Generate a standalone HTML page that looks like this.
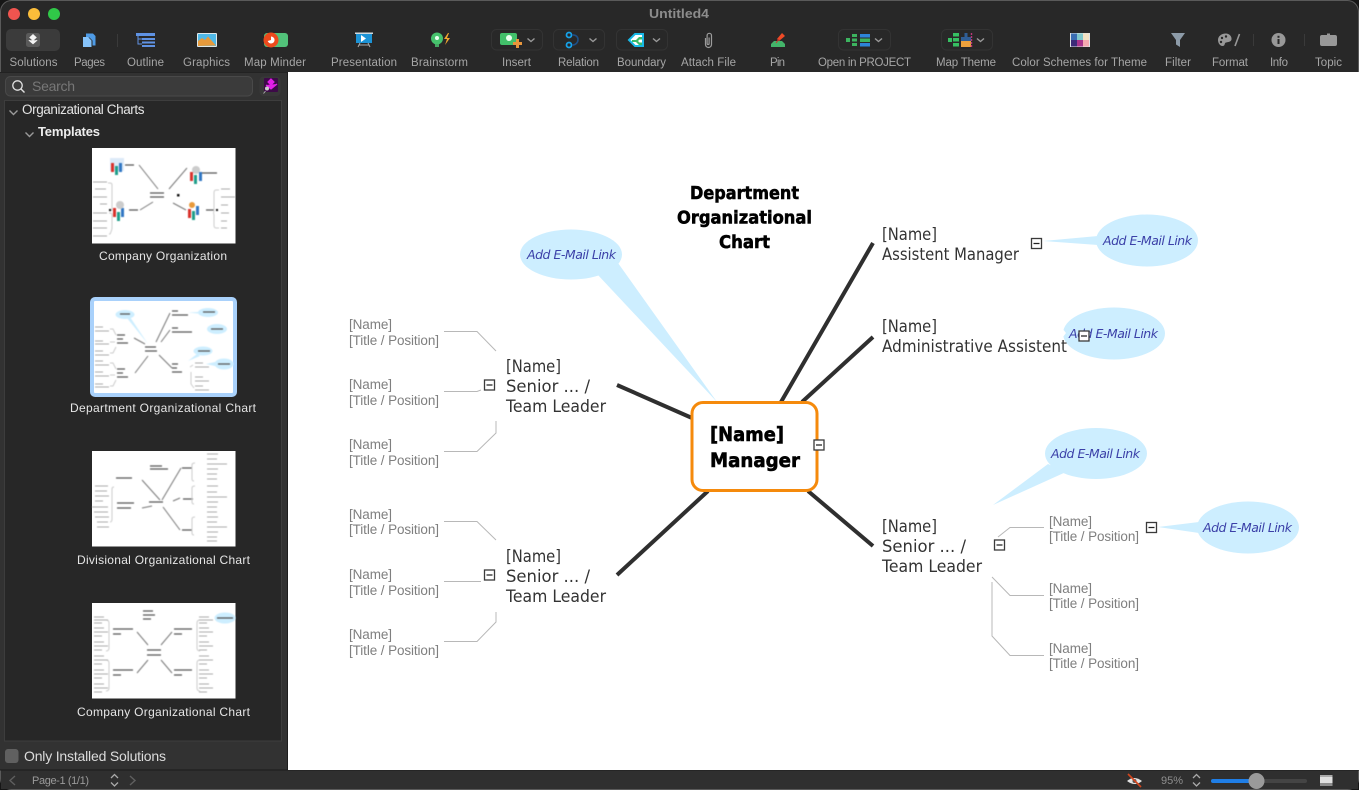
<!DOCTYPE html>
<html><head><meta charset="utf-8"><title>Untitled4</title>
<style>
html,body{margin:0;padding:0;background:#1a1a1a;width:1359px;height:790px;overflow:hidden}
svg{display:block}
text{font-family:"Liberation Sans",sans-serif}
.tb{font-size:11.5px;fill:#a6a6a6;text-anchor:start}
.tp{font-family:"DejaVu Sans",sans-serif;font-size:17px;fill:#333}
.sm{font-size:13.5px;fill:#7f7f7f}
.ca{font-family:"DejaVu Sans",sans-serif;font-style:italic;font-size:12.5px;fill:#3b40a8}
.ti{font-family:"DejaVu Sans",sans-serif;font-weight:bold;font-size:17.5px;fill:#000;stroke:#000;stroke-width:.55}
.cm{font-family:"DejaVu Sans",sans-serif;font-weight:bold;font-size:19.5px;fill:#000;stroke:#000;stroke-width:.6}
.lb{font-size:12px;fill:#e6e6e6}
.ln{fill:none;stroke:#b8b8b8;stroke-width:1}
.dk{stroke:#2f2f2f;stroke-width:4;fill:none}
.bub{fill:#cdeeff}
.chev{fill:none;stroke:#9a9a9a;stroke-width:1.4}
.grp{fill:none;stroke:#333;stroke-width:1}
.t1{stroke:#666;stroke-width:1.2;fill:none}
.t2{stroke:#555;stroke-width:1.3;fill:none}
.t3{stroke:#aaa;stroke-width:1.1;fill:none}
.tl{stroke:#777;stroke-width:1;fill:none}
.br{stroke:#ccc;stroke-width:1;fill:none}
.blur{filter:blur(.4px)}
</style></head>
<body>
<svg width="1359" height="790" viewBox="0 0 1359 790" xmlns="http://www.w3.org/2000/svg">
<!-- window -->
<rect x="0" y="0" width="1359" height="790" fill="#161616"/>
<rect x="0.5" y="0.5" width="1358" height="789" rx="11" fill="#282828" stroke="#5a5a5a"/>

<!-- traffic lights -->
<circle cx="14" cy="14" r="6" fill="#f0544f"/>
<circle cx="34" cy="14" r="6" fill="#fbbd3a"/>
<circle cx="54" cy="14" r="6" fill="#30c848"/>
<text x="649" y="18" font-size="13" font-weight="bold" fill="#8c8c8c" textLength="60" lengthAdjust="spacingAndGlyphs">Untitled4</text>

<!-- toolbar labels -->
<g class="tb">
<text class="tb" x="9.5" y="66" textLength="48">Solutions</text>
<text class="tb" x="74" y="66" textLength="31">Pages</text>
<text class="tb" x="127" y="66" textLength="37">Outline</text>
<text class="tb" x="183" y="66" textLength="47">Graphics</text>
<text class="tb" x="244" y="66" textLength="62">Map Minder</text>
<text class="tb" x="331" y="66" textLength="66">Presentation</text>
<text class="tb" x="411" y="66" textLength="57">Brainstorm</text>
<text class="tb" x="502" y="66" textLength="29">Insert</text>
<text class="tb" x="558" y="66" textLength="41">Relation</text>
<text class="tb" x="617" y="66" textLength="49">Boundary</text>
<text class="tb" x="681" y="66" textLength="55">Attach File</text>
<text class="tb" x="770" y="66" textLength="15">Pin</text>
<text class="tb" x="818" y="66" textLength="93">Open in PROJECT</text>
<text class="tb" x="936" y="66" textLength="60">Map Theme</text>
<text class="tb" x="1012" y="66" textLength="135">Color Schemes for Theme</text>
<text class="tb" x="1165" y="66" textLength="26">Filter</text>
<text class="tb" x="1212" y="66" textLength="36">Format</text>
<text class="tb" x="1270" y="66" textLength="18">Info</text>
<text class="tb" x="1315" y="66" textLength="27">Topic</text>
</g>

<!-- toolbar icons -->
<rect x="6" y="29" width="54" height="22" rx="5" fill="#3b3b3b"/>
<rect x="26" y="33" width="14" height="14" rx="2.5" fill="#5a5a5a"/>
<path d="M33 34.5l3.2 3-3.2 3-3.2-3zM28.8 40.2l4.2 3.600 4.200-3.600" fill="#f4f4f4" stroke="#f4f4f4" stroke-width=".8"/>
<path d="M86 33.500h7l2.500 2.500v9.500h-3v-5l-3-3h-3.500z" fill="#4e9be6"/><path d="M83 37h5l3.500 3.500V47H83z" fill="#86c3fa"/>
<rect x="117" y="34" width="1" height="13" fill="#3a3a3a"/>
<g fill="#5f92e3"><rect x="136" y="33" width="19" height="3"/><rect x="142" y="38" width="13" height="2"/><rect x="142" y="41.5" width="13" height="2"/><rect x="142" y="45" width="13" height="2"/></g>
<path d="M138 36v8h4M138 39h4" fill="none" stroke="#5f92e3"/>
<rect x="197" y="33" width="20" height="14" rx="1" fill="#dfe8ea"/><rect x="198" y="34" width="18" height="12" fill="#4fb9e8"/>
<path d="M198 46v-5l4-3 3 2 3-3.500 8 9z" fill="#e69a3c"/>
<rect x="264" y="33" width="24" height="14" rx="3" fill="#52c27a"/>
<circle cx="271" cy="40" r="7.500" fill="#ec4a1c"/><path d="M271 36.500a3.500 3.500 0 1 1-3.300 4.500l3.300-1z" fill="#fff"/>
<rect x="355" y="32.500" width="18" height="1.500" fill="#cfd8dc"/><rect x="356" y="34" width="16" height="9" fill="#1c93d6"/>
<path d="M361 35l5 3.500-5 3.500z" fill="#fff"/><path d="M360 43l-2 4M368 43l2 4M359 45h10" stroke="#aaa" fill="none"/>
<circle cx="437" cy="38.500" r="6" fill="#46c36d"/><circle cx="437" cy="38" r="2" fill="#eafff0"/><rect x="435" y="44" width="4" height="3" fill="#46a864"/>
<path d="M448 33l-4 6h3l-2 6 5-7h-3l2-5z" fill="#f2a62f"/>

<rect x="491.500" y="29.500" width="51" height="20.500" rx="5" class="grp"/>
<rect x="500" y="33" width="17" height="12" rx="2" fill="#42c06a"/><circle cx="509" cy="38" r="3" fill="#eafff0"/>
<path d="M516 39h3v3h3v3h-3v3h-3v-3h-3v-3h3z" fill="#e8963c"/>
<path d="M527.500 38.500l3.500 3 3.500-3" class="chev"/>
<rect x="553.500" y="29.500" width="51" height="20.500" rx="5" class="grp"/>
<circle cx="569" cy="35" r="2.500" fill="none" stroke="#16a3ea" stroke-width="1.800"/><circle cx="569" cy="45" r="2.500" fill="none" stroke="#16a3ea" stroke-width="1.800"/>
<path d="M572 35c8-1 8 10 0 10" fill="none" stroke="#1e4f86" stroke-width="1.600"/>
<path d="M589.500 38.500l3.500 3 3.500-3" class="chev"/>
<rect x="616.500" y="29.500" width="51" height="20.500" rx="5" class="grp"/>
<path d="M629 40l6-6h8v12h-8z" fill="#fff" stroke="#18b8e6" stroke-width="2"/><path d="M632 40h4l3-3h3v2.500h-2.500l-1.500 1.500 1.500 1.500H642V45h-3l-3-3h-4z" fill="#3cbb68"/>
<path d="M653 38.500l3.500 3 3.500-3" class="chev"/>
<path d="M705.500 38v6.500a3 3 0 0 0 6 0v-9a2.200 2.200 0 0 0-4.400 0v8a1 1 0 0 0 2 0v-6" fill="none" stroke="#9c9c9c" stroke-width="1.200"/>
<path d="M771 47v-3l3-3h8l3 3v3z" fill="#43b56a"/><path d="M777 39l5-6 3 3-6 5z" fill="#ef4a26"/><path d="M776 43l3-4" stroke="#c33" />
<rect x="838.500" y="29.500" width="52" height="20.500" rx="5" class="grp"/>
<g fill="#3cb45f"><rect x="846" y="38" width="4" height="4"/><rect x="852" y="34" width="5" height="3"/><rect x="852" y="38.500" width="5" height="3"/><rect x="852" y="43" width="5" height="3"/></g>
<g fill="#2d84d8"><rect x="860" y="34" width="10" height="3.500"/><rect x="860" y="43" width="10" height="3.500"/></g><rect x="860" y="38.500" width="10" height="3.500" fill="#3cb45f"/>
<path d="M875 38.500l3.500 3 3.500-3" class="chev"/>
<rect x="941.500" y="29.500" width="51" height="20.500" rx="5" class="grp"/>
<g fill="#36c062"><rect x="948" y="38" width="4" height="4"/><rect x="953" y="33" width="6" height="3.500"/><rect x="953" y="38" width="6" height="3.500"/><rect x="953" y="43" width="6" height="3.500"/></g>
<rect x="961" y="37" width="10" height="4" fill="#2f5e96"/><rect x="961" y="41" width="10" height="6" fill="#eda13c"/><rect x="964.500" y="33" width="3" height="4" fill="#2f5e96"/>
<path d="M971.500 33v14" stroke="#b8377a" stroke-width="1.400" stroke-dasharray="2 1"/>
<path d="M977 38.500l3.500 3 3.500-3" class="chev"/>
<rect x="1070" y="33" width="20" height="14" fill="#dfe3e6"/>
<rect x="1071" y="33.500" width="6" height="6.500" fill="#3a6db2"/><rect x="1077" y="33.500" width="6" height="6.500" fill="#80c8cc"/><rect x="1083" y="33.500" width="6" height="6.500" fill="#f4e2c4"/>
<rect x="1071" y="40" width="6" height="6.500" fill="#3b2a78"/><rect x="1077" y="40" width="6" height="6.500" fill="#a8348c"/><rect x="1083" y="40" width="6" height="6.500" fill="#f5a9b0"/>
<path d="M1171 33h14l-5 7v7l-4-2.500V40z" fill="#8d9ba8"/>
<path d="M1226 33.500c-5 0-8 3-8 6.500 0 3 2 6 4.500 6 3 0 1.500-3 3.500-3.500 2-.5 5-.5 5.500-3 .5-3.500-2.500-6-5.500-6z" fill="#989898"/>
<circle cx="1222" cy="38" r="1.200" fill="#282828"/><circle cx="1226" cy="36.500" r="1.200" fill="#282828"/><circle cx="1221" cy="42" r="1.200" fill="#282828"/>
<path d="M1235 46l4.500-12" stroke="#989898" stroke-width="1.600"/>
<rect x="1253" y="34" width="1" height="12" fill="#3a3a3a"/>
<circle cx="1278.500" cy="40" r="7" fill="#989898"/><rect x="1277.500" y="39" width="2" height="5" fill="#282828"/><rect x="1277.500" y="35.800" width="2" height="2" fill="#282828"/>
<rect x="1304" y="34" width="1" height="12" fill="#3a3a3a"/>
<path d="M1320 37q0-2 2-2h5v-1.500h3V35h5q2 0 2 2v7q0 2-2 2h-13q-2 0-2-2z" fill="#989898"/>

<!-- sidebar -->
<rect x="0" y="72" width="287" height="698" fill="#323232"/>
<rect x="287" y="72" width="1" height="698" fill="#1d1d1d"/>
<rect x="0" y="72" width="287" height="1" fill="#222"/>
<rect x="4.500" y="100.500" width="277" height="640.500" fill="#272727" stroke="#3d3d3d"/>
<rect x="5.500" y="76.500" width="247" height="19.500" rx="5" fill="#3b3b3b" stroke="#494949"/>
<circle cx="17.500" cy="85.500" r="4.700" fill="none" stroke="#e0e0e0" stroke-width="1.300"/><path d="M21 89l3.500 3.500" stroke="#e0e0e0" stroke-width="1.400"/>
<text x="32" y="91" font-size="14" fill="#777" textLength="43">Search</text>
<rect x="259.500" y="76.500" width="21" height="19.500" rx="4" fill="#383838"/>
<rect x="264" y="78" width="14" height="14" rx="1" fill="#3d0a48"/>
<path d="M271 79l3 3-3 3-3-3zM266 85l5 4 6-5" fill="#e21ee8" stroke="#e21ee8" stroke-width="1.200"/><circle cx="267" cy="88.500" r="2" fill="#ccc"/><path d="M265.500 91l-2 2.500" stroke="#aaa"/>

<path d="M9.500 110.500l4 4 4-4" class="chev"/>
<text x="22" y="114" font-size="13.500" fill="#e4e4e4" textLength="122.500">Organizational Charts</text>
<path d="M25.500 132.500l4 4 4-4" class="chev"/>
<text x="38" y="136" font-size="13" font-weight="bold" fill="#eeeeee" textLength="62">Templates</text>

<!-- thumb 1 -->
<rect x="92" y="148" width="143.500" height="95.500" fill="#fff"/>
<g class="blur">
<path class="tl" d="M139 165l19 24M169 189l18-21M173 203l13 7M153 202l-13 8" stroke-width="1"/>
<path class="t2" d="M125 165h9M150 193h14M150 197h14M129 210h9M201 173h16M206 210h8"/>
<path d="M108 183h2q2 0 2 2v24q0 2-2 2h-1M109 213h1q2 0 2 2v13q0 2-2 6h-1" class="br"/>
<path d="M219 190h-3q-2 0-2 3v17q0 3-1 3q1 0 1 3v9q0 3 2 3h3" class="br"/>
<path class="t3" d="M93 182h14M95 189h11M93 197h14M100 204h7M93 213h14M93 221h14M93 228h14M93 236h14M221 189h9M221 197h14M221 205h7M221 213h8M221 221h6M221 228h6"/>
<rect x="110" y="158" width="14" height="13" fill="#dceaf8"/>
<g><rect x="111" y="163" width="3" height="9" fill="#d9312b"/><rect x="119" y="163" width="3" height="9" fill="#3177c4"/><rect x="115" y="166" width="3" height="9" fill="#1f9e8a"/></g>
<g><rect x="113" y="208" width="3" height="9" fill="#d9312b"/><rect x="121" y="208" width="3" height="9" fill="#3177c4"/><rect x="117" y="212" width="3" height="9" fill="#1f9e8a"/><circle cx="120" cy="205" r="4" fill="#ccc"/></g>
<g><rect x="190" y="172" width="3" height="9" fill="#d9312b"/><rect x="199" y="172" width="3" height="9" fill="#3177c4"/><rect x="194" y="175" width="3" height="9" fill="#1f9e8a"/><circle cx="196" cy="170" r="4" fill="#ccc"/></g>
<g><rect x="188" y="209" width="3" height="9" fill="#d9312b"/><rect x="196" y="206" width="3" height="9" fill="#3177c4"/><rect x="192" y="211" width="3" height="9" fill="#1f9e8a"/><circle cx="192" cy="205" r="3" fill="#e89a3c"/></g>
<rect x="177" y="194" width="2.500" height="2.500" fill="#111"/><rect x="109" y="209" width="2" height="2" fill="#111"/><rect x="216" y="209" width="2" height="2" fill="#111"/>
</g>
<text class="lb" x="99" y="260" textLength="128">Company Organization</text>

<!-- thumb 2 -->
<rect x="90" y="297" width="147" height="100" rx="5" fill="#a9d1fb"/>
<rect x="94" y="301" width="139" height="92" rx="1" fill="#fff"/>
<g class="blur">
<path d="M130 317l18 27-21-26z" fill="#cdeeff"/><ellipse cx="125" cy="314.500" rx="9.500" ry="4.500" fill="#cdeeff"/>
<ellipse cx="208" cy="312.500" rx="10" ry="4.500" fill="#cdeeff"/><path d="M198 312l-10 .5 10 1z" fill="#cdeeff"/>
<ellipse cx="217" cy="329" rx="10" ry="5" fill="#cdeeff"/>
<ellipse cx="203" cy="351" rx="9.500" ry="4.500" fill="#cdeeff"/><path d="M197 354l-9 7 12-5z" fill="#cdeeff"/>
<ellipse cx="224" cy="364" rx="9.500" ry="5.500" fill="#cdeeff"/><path d="M215 362l-9 2 9 2z" fill="#cdeeff"/>
<path class="tl" d="M170 313l-14 29M170 330l-9 12M159 355l13 13M148 356l-13 17M145 344l-11-6" stroke-width="1"/>
<path class="t2" d="M145 347h11M145 351h12M172 311h6M172 315h16M172 328h6M172 332h20M172 364h6M172 368h5M172 372h10M117 335h8M117 339h6M117 343h11M117 369h8M117 373h6M117 377h11M120 314h10M203 312h12M211 329h12M198 351h12M218 364h12"/>
<path class="t3" d="M95 327h8M95 331h14M95 341h8M95 344h14M95 351h8M95 355h14M95 361h8M95 365h14M95 372h8M95 376h14M95 384h8M95 387h14M195 363h8M195 367h14M195 377h8M195 381h14M195 386h8M195 390h14"/>
<path class="br" d="M110 329h3l3 6M110 342h5M110 353h3l3-6M110 363h3l3 6M110 375h5M110 386h3l3-6M193 365l-3 2M191 372v12l3 4"/>
</g>
<text class="lb" x="70" y="412" textLength="186">Department Organizational Chart</text>

<!-- thumb 3 -->
<rect x="92" y="451" width="143.500" height="95.500" fill="#fff"/>
<g class="blur">
<path class="tl" d="M142 480l18 20M181 468l-19 32M180 498l-7 3M180 530l-17-23M152 506l-10 2" stroke-width="1"/>
<path class="t2" d="M150 466h12M150 469h18M116 478h16M117 503h17M117 508h14M149 502h14M182 468h10M183 499h10M182 530h10"/>
<path class="br" d="M114 487q-2 0-2 2v30q0 3-2 3M195 463q-3 0-3 2v14q0 2 2 2M195 486q-3 0-3 2v14q0 2 2 2M195 517q-3 0-3 2v14q0 2 2 2"/>
<path class="t3" d="M95 486h13M95 491h12M95 496h14M95 501h8M92 507h16M94 512h14M95 517h14M97 522h11M97 527h12M207 454h11M207 459h10M207 464h20M207 469h11M207 474h10M207 479h10M207 486h11M207 492h10M207 497h20M207 502h11M207 507h10M207 512h10M207 517h11M207 522h10M207 527h20M207 532h11M207 537h10M207 541h10"/>
</g>
<text class="lb" x="77" y="564" textLength="173">Divisional Organizational Chart</text>

<!-- thumb 4 -->
<rect x="92" y="603" width="143.500" height="95.500" fill="#fff"/>
<g class="blur">
<path class="tl" d="M137 632l11 13M172 632l-11 13M148 660l-11 13M161 660l11 13" stroke-width="1"/>
<path class="t2" d="M143 611h10M143 615h12M143 619h8M147 650h14M147 655h14M113 629h20M113 634h8M113 670h20M113 675h8M174 629h18M174 634h8M174 670h18M174 675h8"/>
<path class="br" d="M106 620q3 0 3 3v25q0 3-3 3M106 660q3 0 3 3v25q0 3-3 3M200 620q-3 0-3 3v25q0 3 3 3M200 660q-3 0-3 3v25q0 3 3 3"/>
<path class="t3" d="M94 617h10M94 620h14M94 623h8M94 628h10M94 632h14M94 636h8M94 642h10M94 646h14M94 650h8M94 656h10M94 660h14M94 664h8M94 670h10M94 674h14M94 678h8M94 684h10M94 688h14M94 692h8M199 617h10M199 620h14M199 623h8M199 628h10M199 632h14M199 636h8M199 642h10M199 646h14M199 650h8M199 656h10M199 660h14M199 664h8M199 670h10M199 674h14M199 678h8M199 684h10M199 688h14M199 692h8"/>
<ellipse cx="225" cy="618" rx="10.500" ry="5.500" fill="#cdeeff"/><path class="t2" d="M217 618h16" stroke="#3b40a8"/>
</g>
<text class="lb" x="77" y="716" textLength="173">Company Organizational Chart</text>

<rect x="5" y="749" width="13.500" height="14" rx="3" fill="#606060"/>
<text x="24" y="761" font-size="14" fill="#dcdcdc" textLength="142">Only Installed Solutions</text>

<!-- status bar -->
<rect x="1" y="770" width="1357" height="19" fill="#2f2f2f"/>
<rect x="0" y="769.500" width="1359" height="1" fill="#1b1b1b"/>
<path d="M15 776l-5 4.500 5 4.500" fill="none" stroke="#5f5f5f" stroke-width="1.400"/>
<text x="32" y="784" font-size="11" fill="#9a9a9a" textLength="57">Page-1 (1/1)</text>
<path d="M111 778l3.500-3.500 3.500 3.500M111 782.500l3.500 3.500 3.500-3.500" fill="none" stroke="#aaa" stroke-width="1.300"/>
<path d="M130 776l5 4.500-5 4.500" fill="none" stroke="#5f5f5f" stroke-width="1.400"/>
<path d="M1127 781q7-6 15 0q-7 6-15 0z" fill="#e4e4e4"/><circle cx="1134.500" cy="781" r="2" fill="#555"/><path d="M1128 774l13 13" stroke="#d2461e" stroke-width="1.700"/>
<text x="1161" y="784" font-size="11" fill="#8f8f8f" textLength="22">95%</text>
<path d="M1193 778l3.500-3.500 3.500 3.500M1193 782.500l3.500 3.500 3.500-3.500" fill="none" stroke="#aaa" stroke-width="1.300"/>
<rect x="1211" y="779" width="96" height="4" rx="2" fill="#444"/>
<rect x="1211" y="779" width="45" height="4" rx="2" fill="#1f7ee6"/>
<circle cx="1256.500" cy="781" r="8" fill="#9a9a9a"/>
<rect x="1320" y="775" width="12.500" height="11" fill="#e0e0e0"/><rect x="1320" y="775" width="12.500" height="2" fill="#aaa"/><rect x="1320" y="783" width="12.500" height="3" fill="#8c8c8c"/>

<!-- canvas -->
<rect x="288" y="72" width="1071" height="698" fill="#fff"/>

<!-- branch lines -->
<path class="dk" d="M781 402L873 243M802 402L873 337M808 491L873 546M708 491L617 575M692 418L617 385"/>

<!-- callouts -->
<path class="bub" d="M597 274L717 402L618 263z"/><ellipse class="bub" cx="571" cy="254.500" rx="51" ry="25"/>
<path class="bub" d="M1098 236L1043 241L1098 245z"/><ellipse class="bub" cx="1147" cy="240.500" rx="51" ry="26"/>
<ellipse class="bub" cx="1114" cy="333.500" rx="51" ry="26"/><path d="M1062 328l4 5-3 4z" fill="#fff"/>
<path class="bub" d="M1048 464L993 505L1066 472z"/><ellipse class="bub" cx="1096" cy="453.500" rx="51" ry="25.500"/>
<path class="bub" d="M1199 522L1158 527L1199 533z"/><ellipse class="bub" cx="1248" cy="527.500" rx="51" ry="26"/>

<text class="ca" x="527" y="259" textLength="89">Add E-Mail Link</text>
<text class="ca" x="1103" y="245" textLength="89">Add E-Mail Link</text>
<text class="ca" x="1069" y="338" textLength="89">Add E-Mail Link</text>
<text class="ca" x="1051" y="458" textLength="89">Add E-Mail Link</text>
<text class="ca" x="1203" y="532" textLength="89">Add E-Mail Link</text>

<!-- title -->
<text class="ti" x="690" y="199" textLength="109" lengthAdjust="spacingAndGlyphs">Department</text>
<text class="ti" x="677" y="223.500" textLength="135" lengthAdjust="spacingAndGlyphs">Organizational</text>
<text class="ti" x="719" y="248" textLength="51" lengthAdjust="spacingAndGlyphs">Chart</text>

<!-- center -->
<rect x="692" y="402.500" width="125" height="88" rx="11" fill="#fff" stroke="#f58a0c" stroke-width="3"/>
<text class="cm" x="710" y="441" textLength="74" lengthAdjust="spacingAndGlyphs">[Name]</text>
<text class="cm" x="710" y="467" textLength="90" lengthAdjust="spacingAndGlyphs">Manager</text>

<!-- topics -->
<text class="tp" x="882" y="240" textLength="55" lengthAdjust="spacingAndGlyphs">[Name]</text>
<text class="tp" x="882" y="260" textLength="137" lengthAdjust="spacingAndGlyphs">Assistent Manager</text>
<text class="tp" x="882" y="332" textLength="55" lengthAdjust="spacingAndGlyphs">[Name]</text>
<text class="tp" x="882" y="352" textLength="185" lengthAdjust="spacingAndGlyphs">Administrative Assistent</text>
<text class="tp" x="882" y="532" textLength="55" lengthAdjust="spacingAndGlyphs">[Name]</text>
<text class="tp" x="882" y="552" textLength="84" lengthAdjust="spacingAndGlyphs">Senior ... /</text>
<text class="tp" x="882" y="572" textLength="100" lengthAdjust="spacingAndGlyphs">Team Leader</text>
<text class="tp" x="506" y="372" textLength="55" lengthAdjust="spacingAndGlyphs">[Name]</text>
<text class="tp" x="506" y="392" textLength="84" lengthAdjust="spacingAndGlyphs">Senior ... /</text>
<text class="tp" x="506" y="412" textLength="100" lengthAdjust="spacingAndGlyphs">Team Leader</text>
<text class="tp" x="506" y="562" textLength="55" lengthAdjust="spacingAndGlyphs">[Name]</text>
<text class="tp" x="506" y="582" textLength="84" lengthAdjust="spacingAndGlyphs">Senior ... /</text>
<text class="tp" x="506" y="602" textLength="100" lengthAdjust="spacingAndGlyphs">Team Leader</text>

<!-- sub topics -->
<g>
<text class="sm" x="349" y="329" textLength="43">[Name]</text><text class="sm" x="349" y="345" textLength="90">[Title / Position]</text>
<text class="sm" x="349" y="389" textLength="43">[Name]</text><text class="sm" x="349" y="405" textLength="90">[Title / Position]</text>
<text class="sm" x="349" y="449" textLength="43">[Name]</text><text class="sm" x="349" y="465" textLength="90">[Title / Position]</text>
<text class="sm" x="349" y="519" textLength="43">[Name]</text><text class="sm" x="349" y="534" textLength="90">[Title / Position]</text>
<text class="sm" x="349" y="579" textLength="43">[Name]</text><text class="sm" x="349" y="595" textLength="90">[Title / Position]</text>
<text class="sm" x="349" y="639" textLength="43">[Name]</text><text class="sm" x="349" y="655" textLength="90">[Title / Position]</text>
<text class="sm" x="1049" y="526" textLength="43">[Name]</text><text class="sm" x="1049" y="541" textLength="90">[Title / Position]</text>
<text class="sm" x="1049" y="593" textLength="43">[Name]</text><text class="sm" x="1049" y="608" textLength="90">[Title / Position]</text>
<text class="sm" x="1049" y="653" textLength="43">[Name]</text><text class="sm" x="1049" y="668" textLength="90">[Title / Position]</text>
</g>

<!-- connectors -->
<path class="ln" d="M444 331.500H477L496 351M444 391.500H477L481 390M444 451.500H477L496 433V421M444 521.500H477L496 540M444 581.500H481M444 641.500H477L496 622V612M998 537L1010 527.500H1044M992 577L1010 595.500H1044M992 582V636L1010 655.500H1044"/>

<!-- collapse icons -->
<g fill="#fff" stroke="#3a3a3a" stroke-width="1.300">
<rect x="484.500" y="380" width="10" height="10"/><rect x="484.500" y="570" width="10" height="10"/>
<rect x="814" y="440" width="10" height="10"/><rect x="1031.500" y="238.500" width="10" height="10"/>
<rect x="1079" y="331" width="10" height="10"/><rect x="994.500" y="540" width="10" height="10"/><rect x="1146.500" y="522.500" width="10" height="10"/>
</g>
<path d="M486.500 385h6M486.500 575h6M816 445h6M1033.500 243.500h6M1081 336h6M996.500 545h6M1148.500 527.500h6" stroke="#222" stroke-width="1.200"/>
</svg>
</body></html>
